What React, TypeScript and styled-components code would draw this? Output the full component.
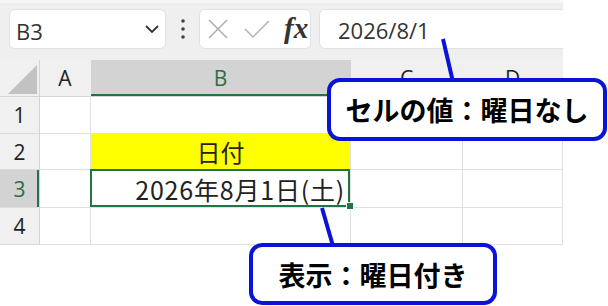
import styled, { createGlobalStyle } from 'styled-components';

const GlobalStyle = createGlobalStyle`
  html, body {
    margin: 0;
    padding: 0;
    background: #ffffff;
  }
`;

const GREEN = '#217346';
const BLUE = '#0a14d8';
const UI_FONT = `"Open Sans", "Noto Sans", "Liberation Sans", sans-serif`;
const CELL_FONT = `"Noto Sans CJK JP", "Noto Sans", sans-serif`;

const Page = styled.div`
  position: relative;
  width: 608px;
  height: 306px;
  overflow: hidden;
  background: #ffffff;
`;

const Excel = styled.div`
  width: 563px;
  display: flex;
  flex-direction: column;
`;

const Toolbar = styled.div`
  height: 60px;
  box-sizing: border-box;
  background: #efefef;
  border-top: 3px solid #f7f7f7;
  padding: 6px 0 0 9px;
  display: flex;
  align-items: flex-start;
`;

const Box = styled.div<{ $width: number; $open?: boolean }>`
  width: ${({ $width }) => $width}px;
  height: 40px;
  box-sizing: border-box;
  background: #ffffff;
  border: 1px solid #e2e2e2;
  border-radius: ${({ $open }) => ($open ? '6px 0 0 6px' : '6px')};
  border-right-width: ${({ $open }) => ($open ? 0 : 1)}px;
  display: flex;
  align-items: center;
  font-family: ${UI_FONT};
  font-size: 22px;
  color: #333333;
`;

const NameText = styled.span`
  flex: 1;
  padding: 3px 0 0 6px;
`;

const DotsArea = styled.div`
  width: 33px;
  height: 40px;
  display: flex;
  align-items: center;
  justify-content: center;
`;

const FxGroup = styled(Box)`
  padding-left: 8px;
  gap: 16px;
`;

const Fx = styled.span`
  font-family: "Liberation Serif", "DejaVu Serif", serif;
  font-style: italic;
  font-weight: 700;
  font-size: 29px;
  color: #333333;
  margin-left: -2px;
  margin-top: -2px;
`;

const FormulaText = styled.span`
  padding: 2px 0 0 18px;
`;

const Sheet = styled.div`
  display: grid;
  grid-template-columns: 40px 51px 260px 112px 100px;
  grid-template-rows: 37px 37px 36px 38px 37px;
`;

const Cell = styled.div<{ $head?: boolean; $active?: boolean; $fill?: string; $align?: string }>`
  position: relative;
  box-sizing: border-box;
  border-right: 1px solid ${({ $head }) => ($head ? '#d4d4d4' : '#e1e1e1')};
  border-bottom: 1px solid ${({ $head }) => ($head ? '#d4d4d4' : '#e1e1e1')};
  background: ${({ $fill, $head, $active }) =>
    $fill ?? ($active ? '#d3d3d3' : $head ? '#f0f0f0' : '#ffffff')};
  display: flex;
  align-items: center;
  justify-content: ${({ $align }) => $align ?? 'center'};
  font-family: ${({ $head }) => ($head ? UI_FONT : CELL_FONT)};
  font-size: ${({ $head }) => ($head ? 21 : 24)}px;
  color: ${({ $active }) => ($active ? '#2e6e48' : '#222222')};
`;

const ColHead = styled(Cell)`
  box-shadow: ${({ $active }) => ($active ? `inset 0 -2px 0 ${GREEN}` : 'none')};
  border-right-color: ${({ $active }) => ($active ? '#d3d3d3' : '#f0f0f0')};
`;

const RowHead = styled(Cell)`
  box-shadow: ${({ $active }) => ($active ? `inset -2px 0 0 ${GREEN}` : 'none')};
  border-right-color: #d4d4d4;
  border-bottom-color: #dcdcdc;
`;

const Corner = styled(Cell)`
  &::after {
    content: '';
    position: absolute;
    left: 8px;
    top: 5px;
    width: 29px;
    height: 29px;
    background: #c2c2c2;
    clip-path: polygon(100% 0, 100% 100%, 0 100%);
  }
`;

const Selected = styled(Cell)`
  padding-right: 5px;
  font-size: 25px;
  letter-spacing: 0.8px;
  &::after {
    content: '';
    position: absolute;
    inset: -1px 0 0 -1px;
    border: 2px solid ${GREEN};
  }
  &::before {
    content: '';
    position: absolute;
    right: -4px;
    bottom: -3px;
    width: 6px;
    height: 6px;
    background: ${GREEN};
    border: 1px solid #ffffff;
    z-index: 1;
  }
`;

const Overlay = styled.svg`
  position: absolute;
  left: 0;
  top: 0;
`;

const Callout = styled.div<{ $x: number; $y: number; $w: number; $h: number }>`
  position: absolute;
  left: ${({ $x }) => $x}px;
  top: ${({ $y }) => $y}px;
  width: ${({ $w }) => $w}px;
  height: ${({ $h }) => $h}px;
  box-sizing: border-box;
  border: 4px solid ${BLUE};
  border-radius: 13px;
  background: #ffffff;
  display: flex;
  align-items: center;
  justify-content: center;
  font-family: ${CELL_FONT};
  font-weight: 700;
  font-size: 27px;
  color: #000000;
`;

function Chevron() {
  return (
    <svg width="26" height="40" viewBox="0 0 26 40">
      <polyline points="7,17 13,23 19,17" fill="none" stroke="#333" strokeWidth="1.8" />
    </svg>
  );
}

function Dots() {
  return (
    <svg width="6" height="22" viewBox="0 0 6 22">
      <circle cx="3" cy="3" r="1.8" fill="#444" />
      <circle cx="3" cy="11" r="1.8" fill="#444" />
      <circle cx="3" cy="19" r="1.8" fill="#444" />
    </svg>
  );
}

function Cancel() {
  return (
    <svg width="20" height="20" viewBox="0 0 20 20">
      <path d="M1 1 L19 19 M19 1 L1 19" stroke="#acacac" strokeWidth="1.5" fill="none" />
    </svg>
  );
}

function Confirm() {
  return (
    <svg width="26" height="20" viewBox="0 0 26 20">
      <polyline points="1,10 9,18 25,2" stroke="#b4b4b4" strokeWidth="1.5" fill="none" />
    </svg>
  );
}

export default function App() {
  return (
    <Page>
      <GlobalStyle />
      <Excel>
        <Toolbar>
          <Box $width={157}>
            <NameText>B3</NameText>
            <Chevron />
          </Box>
          <DotsArea>
            <Dots />
          </DotsArea>
          <FxGroup $width={112}>
            <Cancel />
            <Confirm />
            <Fx>fx</Fx>
          </FxGroup>
          <Box $width={244} $open style={{ marginLeft: 8 }}>
            <FormulaText>2026/8/1</FormulaText>
          </Box>
        </Toolbar>
        <Sheet>
          <Corner $head />
          <ColHead $head>A</ColHead>
          <ColHead $head $active>B</ColHead>
          <ColHead $head>C</ColHead>
          <ColHead $head>D</ColHead>

          <RowHead $head>1</RowHead>
          <Cell />
          <Cell />
          <Cell />
          <Cell />

          <RowHead $head>2</RowHead>
          <Cell />
          <Cell $fill="#ffff00">日付</Cell>
          <Cell />
          <Cell />

          <RowHead $head $active>3</RowHead>
          <Cell />
          <Selected $align="flex-end">2026年8月1日(土)</Selected>
          <Cell />
          <Cell />

          <RowHead $head>4</RowHead>
          <Cell />
          <Cell />
          <Cell />
          <Cell />
        </Sheet>
      </Excel>
      <Overlay width="608" height="306" viewBox="0 0 608 306">
        <line x1="443" y1="39" x2="453" y2="82" stroke={BLUE} strokeWidth="4" />
        <line x1="322" y1="208" x2="333" y2="246" stroke={BLUE} strokeWidth="4" />
      </Overlay>
      <Callout $x={327} $y={78} $w={280} $h={63}>
        セルの値：曜日なし
      </Callout>
      <Callout $x={249} $y={243} $w={248} $h={62}>
        表示：曜日付き
      </Callout>
    </Page>
  );
}
